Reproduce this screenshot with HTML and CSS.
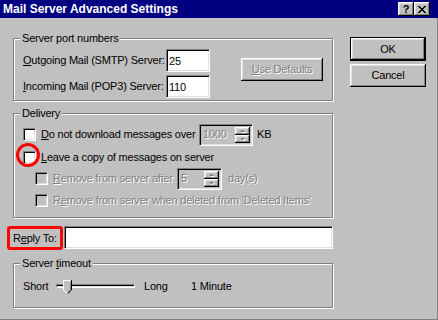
FILE: index.html
```html
<!DOCTYPE html>
<html lang="en">
<head>
    <meta charset="UTF-8">
    <title>Mail Server Advanced Settings</title>
    <link rel="stylesheet" href="styles.css">
</head>
<body>
    <div class="window">
        <div class="titlebar">
            <span class="title">Mail Server Advanced Settings</span>
            <div class="caption-buttons">
                <span class="caption-btn help-btn">?</span>
                <span class="caption-btn close-btn">
                    <svg width="8" height="7" viewBox="0 0 8 7">
                        <path d="M0 0h2v1H0z M6 0h2v1H6z M1 1h2v1H1z M5 1h2v1H5z M2 2h4v1H2z M3 3h2v1H3z M2 4h4v1H2z M1 5h2v1H1z M5 5h2v1H5z M0 6h2v1H0z M6 6h2v1H6z" fill="#000"/>
                    </svg>
                </span>
            </div>
        </div>

        <div class="content">
            <div class="main">

                <div class="group group-ports">
                    <div class="group-title">Server port numbers</div>
                    <div class="ports">
                        <div class="port-fields">
                            <div class="port-row">
                                <label class="port-label" for="smtp"><u>O</u>utgoing Mail (SMTP) Server:</label>
                                <input class="field port-input" id="smtp" type="text" value="25">
                            </div>
                            <div class="port-row">
                                <label class="port-label" for="pop3"><u>I</u>ncoming Mail (POP3) Server:</label>
                                <input class="field port-input" id="pop3" type="text" value="110">
                            </div>
                        </div>
                        <button class="btn btn-disabled use-defaults" type="button"><u>U</u>se Defaults</button>
                    </div>
                </div>

                <div class="group group-delivery">
                    <div class="group-title">Delivery</div>

                    <div class="check-row row-over">
                        <span class="check"></span>
                        <span class="check-label label-over"><u>D</u>o not download messages over</span>
                        <div class="spin spin-size">
                            <span class="spin-value">1000</span>
                            <div class="spin-buttons">
                                <span class="spin-btn"><i class="arrow arrow-up"></i></span>
                                <span class="spin-btn"><i class="arrow arrow-down"></i></span>
                            </div>
                        </div>
                        <span class="unit">KB</span>
                    </div>

                    <div class="check-row row-leave">
                        <span class="check check-marked"></span>
                        <span class="check-label"><u>L</u>eave a copy of messages on server</span>
                    </div>

                    <div class="check-row row-after sub-row">
                        <span class="check check-disabled"></span>
                        <span class="check-label label-after disabled"><u>R</u>emove from server after</span>
                        <div class="spin spin-days">
                            <span class="spin-value">5</span>
                            <div class="spin-buttons">
                                <span class="spin-btn"><i class="arrow arrow-up"></i></span>
                                <span class="spin-btn"><i class="arrow arrow-down"></i></span>
                            </div>
                        </div>
                        <span class="unit unit-days disabled">day(s)</span>
                    </div>

                    <div class="check-row row-deleted sub-row">
                        <span class="check check-disabled"></span>
                        <span class="check-label disabled">R<u>e</u>move from server when deleted from 'Deleted Items'</span>
                    </div>
                </div>

                <div class="reply-row">
                    <label class="reply-label" for="replyTo">R<u>e</u>ply To:</label>
                    <input class="field reply-input" id="replyTo" type="text" value="">
                </div>

                <div class="group group-timeout">
                    <div class="group-title">Server <u>t</u>imeout</div>
                    <div class="slider-row">
                        <span class="slider-text">Short</span>
                        <div class="slider">
                            <div class="slider-track"></div>
                            <svg class="slider-thumb" width="9" height="14" viewBox="0 0 9 14">
                                <path d="M0 0h9v10l-4.5 4L0 10z" fill="#c0c0c0"/>
                                <path d="M0.5 10V0.5H8" stroke="#fff" fill="none"/>
                                <path d="M0.5 10L4.5 13.5" stroke="#fff" fill="none"/>
                                <path d="M8.5 0V10L4.5 13.8" stroke="#000" fill="none"/>
                                <path d="M7.5 1.5V9.6L4.5 12.3" stroke="#808080" fill="none"/>
                            </svg>
                        </div>
                        <span class="slider-text slider-long">Long</span>
                        <span class="slider-value">1 Minute</span>
                    </div>
                </div>

            </div>

            <div class="actions">
                <button class="btn btn-default" type="button">OK</button>
                <button class="btn btn-cancel" type="button">Cancel</button>
            </div>
        </div>
    </div>
</body>
</html>
```

FILE: styles.css
```css
body {
    margin: 0;
    background-color: #c0c0c0;
    font-family: 'Liberation Sans', Arial, sans-serif;
    font-size: 11px;
    letter-spacing: -0.2px;
    line-height: 13px;
    color: #000;
}

u {
    text-decoration: underline;
    text-underline-offset: 1px;
}

.window {
    width: 438px;
    height: 320px;
    display: flex;
    flex-direction: column;
    background-color: #c0c0c0;
}

/* title bar */
.titlebar {
    flex: none;
    height: 18px;
    background-color: #000080;
    display: flex;
    align-items: center;
    justify-content: space-between;
    padding: 0 8px 0 3px;
}

.title {
    color: #fff;
    font-weight: bold;
    font-size: 12px;
    letter-spacing: 0;
    padding-top: 1px;
}

.caption-buttons {
    display: flex;
}

.caption-btn {
    width: 16px;
    height: 14px;
    box-sizing: border-box;
    display: flex;
    align-items: center;
    justify-content: center;
    background-color: #c0c0c0;
    box-shadow: inset -1px -1px #000, inset 1px 1px #fff, inset -2px -2px #808080, inset 2px 2px #dfdfdf;
}

.help-btn {
    font-weight: bold;
    font-size: 11px;
    letter-spacing: 0;
}

.close-btn svg {
    display: block;
}

/* body of the dialog */
.content {
    flex: 1;
    display: flex;
    padding-left: 13px;
    border-right: 1px solid #808080;
    border-bottom: 1px solid #808080;
}

.main {
    width: 320px;
    padding-top: 20px;
}

.actions {
    width: 76px;
    margin-left: 17px;
    padding-top: 19px;
    display: flex;
    flex-direction: column;
}

/* group boxes */
.group {
    box-sizing: border-box;
    border: 1px solid #808080;
    box-shadow: inset 1px 1px #fff, 1px 1px #fff;
    padding: 0 9px;
}

.group-title {
    width: fit-content;
    margin: -7px 0 0 -3px;
    padding: 0 2px;
    background-color: #c0c0c0;
    line-height: 13px;
}

.group-ports {
    height: 63px;
}

.group-delivery {
    height: 105px;
    margin-top: 12px;
}

.group-timeout {
    height: 45px;
    margin-top: 13px;
}

/* sunken edit fields */
.field {
    box-sizing: border-box;
    height: 23px;
    margin: 0;
    padding: 0 0 0 2px;
    border: 1px solid;
    border-color: #808080 #fff #fff #808080;
    box-shadow: inset 1px 1px #000, inset -1px -1px #dfdfdf;
    background-color: #fff;
    font: inherit;
    letter-spacing: inherit;
    color: #000;
    outline: none;
    appearance: none;
    border-radius: 0;
}

/* server port numbers */
.ports {
    display: flex;
    align-items: flex-start;
    margin-top: 4px;
}

.port-fields {
    display: flex;
    flex-direction: column;
    gap: 3px;
}

.port-row {
    display: flex;
    align-items: center;
}

.port-label {
    width: 143px;
}

.port-input {
    width: 44px;
}

/* raised buttons */
.btn {
    box-sizing: border-box;
    margin: 0;
    padding: 0;
    border: none;
    background-color: #c0c0c0;
    box-shadow: inset -1px -1px #000, inset 1px 1px #fff, inset -2px -2px #808080, inset 2px 2px #dfdfdf;
    font: inherit;
    letter-spacing: inherit;
    color: #000;
    text-align: center;
}

.btn-disabled {
    color: #808080;
    text-shadow: 1px 1px #fff;
}

.use-defaults {
    width: 82px;
    height: 23px;
    margin: 9px 0 0 31px;
}

.btn-default {
    height: 24px;
    border: 1px solid #000;
}

.btn-cancel {
    height: 23px;
    margin-top: 3px;
}

/* delivery check rows */
.check-row {
    display: flex;
    align-items: center;
}

.row-over {
    height: 23px;
    margin-top: 3px;
}

.row-leave {
    height: 22px;
}

.row-after {
    height: 21px;
}

.row-deleted {
    height: 23px;
}

.sub-row {
    padding-left: 12px;
}

.check {
    position: relative;
    flex: none;
    width: 13px;
    height: 13px;
    box-sizing: border-box;
    border: 1px solid;
    border-color: #808080 #fff #fff #808080;
    box-shadow: inset 1px 1px #000, inset -1px -1px #dfdfdf;
    background-color: #fff;
}

.check-disabled {
    background-color: #c0c0c0;
}

/* red annotation ring */
.check-marked::after {
    content: '';
    position: absolute;
    left: -8px;
    top: -9px;
    width: 24px;
    height: 24px;
    box-sizing: border-box;
    border: 3px solid #f00;
    border-radius: 50%;
}

.check-label {
    margin-left: 5px;
    white-space: nowrap;
}

.label-over {
    width: 158px;
}

.label-after {
    width: 124px;
}

.disabled {
    color: #808080;
    text-shadow: 1px 1px #fff;
}

/* spin boxes */
.spin {
    box-sizing: border-box;
    height: 22px;
    display: flex;
    align-items: center;
    justify-content: space-between;
    padding: 2px;
    border: 1px solid;
    border-color: #808080 #fff #fff #808080;
    box-shadow: inset 1px 1px #000, inset -1px -1px #dfdfdf;
    background-color: #c0c0c0;
}

.spin-size {
    width: 54px;
}

.spin-days {
    width: 45px;
}

.spin-value {
    color: #808080;
    text-shadow: 1px 1px #fff;
    padding-left: 1px;
}

.spin-buttons {
    display: flex;
    flex-direction: column;
    height: 100%;
}

.spin-btn {
    width: 15px;
    flex: 1;
    box-sizing: border-box;
    display: flex;
    align-items: center;
    justify-content: center;
    box-shadow: inset -1px -1px #000, inset 1px 1px #fff, inset -2px -2px #808080, inset 2px 2px #dfdfdf;
}

.arrow {
    width: 1px;
    height: 0;
    border-left: 2px solid transparent;
    border-right: 2px solid transparent;
    filter: drop-shadow(1px 1px 0 #fff);
}

.arrow-up {
    border-bottom: 2px solid #808080;
}

.arrow-down {
    border-top: 2px solid #808080;
}

.unit {
    margin-left: 4px;
}

.unit-days {
    margin-left: 6px;
}

/* reply to */
.reply-row {
    display: flex;
    align-items: flex-start;
    margin-top: 8px;
}

.reply-label {
    box-sizing: border-box;
    width: 56px;
    height: 24px;
    margin-left: -6px;
    padding-left: 3px;
    display: flex;
    align-items: center;
    border: 3px solid #f00;
    border-radius: 3px;
}

.reply-input {
    width: 270px;
    margin-left: 1px;
}

/* server timeout slider */
.slider-row {
    display: flex;
    align-items: center;
    height: 20px;
    margin-top: 6px;
}

.slider-text {
    width: 33px;
}

.slider {
    position: relative;
    width: 79px;
    height: 20px;
    display: flex;
    align-items: center;
}

.slider-track {
    width: 100%;
    height: 4px;
    box-sizing: border-box;
    border: 1px solid;
    border-color: #808080 #fff #fff #808080;
    background: linear-gradient(#000 50%, #dfdfdf 50%);
}

.slider-thumb {
    position: absolute;
    left: 7px;
    top: 4px;
}

.slider-long {
    width: 47px;
    margin-left: 9px;
}
```
